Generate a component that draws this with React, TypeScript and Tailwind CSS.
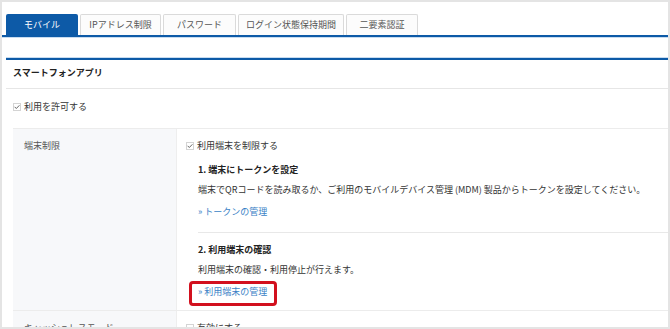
import React from "react";

const Check = ({ checked }: { checked: boolean }) => (
  <svg width="8" height="8" viewBox="0 0 8 8" className="shrink-0">
    <rect x="0.5" y="0.5" width="7" height="7" fill="#fff" stroke="#d4d4d4" />
    {checked && <path d="M1.6 3.8 L3.3 5.5 L6.4 2.3" fill="none" stroke="#555" strokeWidth="0.9" />}
  </svg>
);

const tabs: { label: string; w: string; active?: boolean }[] = [
  { label: "モバイル", w: "w-[72px]", active: true },
  { label: "IPアドレス制限", w: "w-[81px]" },
  { label: "パスワード", w: "w-[73px]" },
  { label: "ログイン状態保持期間", w: "w-[106px]" },
  { label: "二要素認証", w: "w-[72px]" },
];

export default function App() {
  return (
    <div
      className="w-[670px] h-[329px] border-2 border-[#e4e4e4] bg-white overflow-hidden text-[9px] leading-[12px] text-[#333]"
      style={{ fontFamily: '"Noto Sans CJK JP", "Noto Sans", sans-serif' }}
    >
      {/* tabs */}
      <div className="flex gap-[2px] pl-[4px] pt-[12px]">
        {tabs.map((t) =>
          t.active ? (
            <div
              key={t.label}
              className={`${t.w} h-[21px] flex items-center justify-center rounded-t-[2px] bg-[#0d5aa7] text-white`}
            >
              {t.label}
            </div>
          ) : (
            <div
              key={t.label}
              className={`${t.w} h-[21px] flex items-center justify-center rounded-t-[2px] border border-b-0 border-[#dadada] bg-[#fcfcfc] text-[#555]`}
            >
              {t.label}
            </div>
          )
        )}
      </div>
      <div className="h-[2px] bg-[#0d5aa7]" />
      <div className="h-px bg-[#c8dcf0]" />

      {/* content */}
      <div className="pl-[4px] mt-[19px]">
        <div className="h-px bg-[#c8dcf0]" />
        <div className="h-[2px] bg-[#0d5aa7]" />
        <div className="h-[29px] pt-[7px] pl-[7px] border-b border-[#e6e6e6] font-bold text-[#222]">
          スマートフォンアプリ
        </div>

        <div className="pl-[7px] pt-[12px] flex items-center gap-[3px]">
          <Check checked />
          <span>利用を許可する</span>
        </div>

        <div className="ml-[7px] mt-[15px] border-t border-[#ececec]">
          {/* row 1 */}
          <div className="flex border-b border-[#ececec]">
            <div className="w-[163px] shrink-0 bg-[#f7f8fa] pl-[11px] pt-[11px] text-[#555]">端末制限</div>
            <div className="flex-1 border-l border-[#eeeeee] pl-[9px] pt-[11px] pb-[12px]">
              <div className="flex items-center gap-[3px]">
                <Check checked />
                <span>利用端末を制限する</span>
              </div>
              <div className="pl-[12px]">
                <div className="mt-[12px] font-bold text-[#222]">1. 端末にトークンを設定</div>
                <div className="mt-[8px]">
                  端末でQRコードを読み取るか、ご利用のモバイルデバイス管理 (MDM) 製品からトークンを設定してください。
                </div>
                <div className="mt-[10px] text-[#3a7fc6]">» トークンの管理</div>
                <div className="mt-[14px] border-t border-[#e8e8e8]" />
                <div className="mt-[11px] font-bold text-[#222]">2. 利用端末の確認</div>
                <div className="mt-[8px]">利用端末の確認・利用停止が行えます。</div>
                <div className="mt-[10px] relative w-fit text-[#3a7fc6]">
                  » 利用端末の管理
                  <div className="absolute left-[-9px] top-[-5px] w-[88px] h-[25px] border-[3px] border-[#d2101e] rounded-[4px]" />
                </div>
              </div>
            </div>
          </div>
          {/* row 2 */}
          <div className="flex">
            <div className="w-[163px] shrink-0 bg-[#f7f8fa] pl-[11px] pt-[11px] pb-[10px] text-[#555]">キャッシュレスモード</div>
            <div className="flex-1 border-l border-[#eeeeee] pl-[9px] pt-[11px]">
              <div className="flex items-center gap-[3px]">
                <Check checked={false} />
                <span>有効にする</span>
              </div>
            </div>
          </div>
        </div>
      </div>
    </div>
  );
}
